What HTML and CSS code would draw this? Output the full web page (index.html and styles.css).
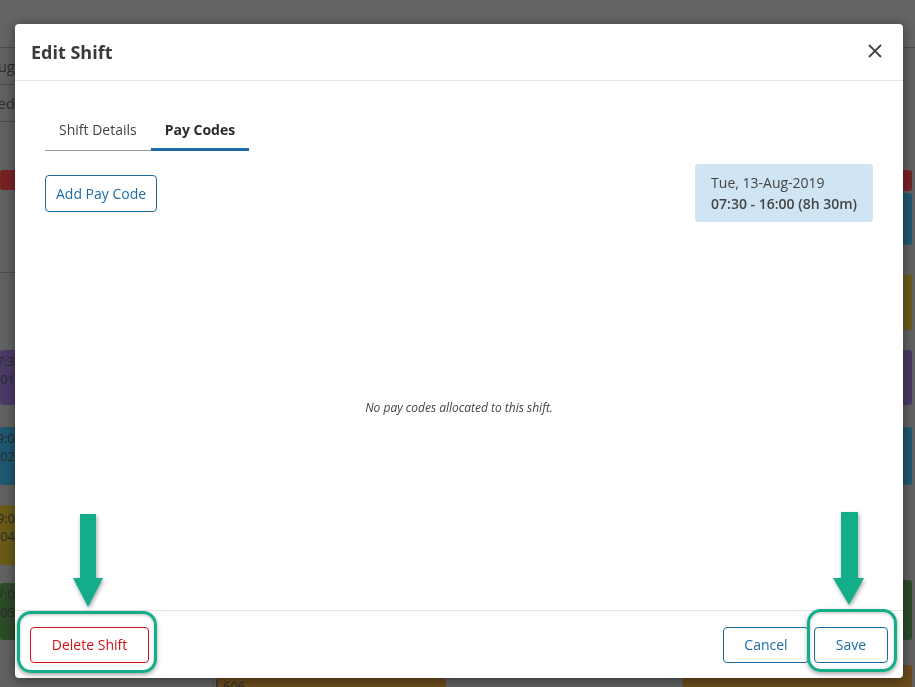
FILE: index.html
```html
<!DOCTYPE html>
<html lang="en">
<head>
    <meta charset="UTF-8">
    <title>Edit Shift</title>
    <link rel="stylesheet" href="styles.css">
</head>
<body>
    <!-- roster page behind the dialog, dimmed -->
    <div class="backdrop">
        <div class="topbar"></div>
        <div class="lanes">
            <div class="lane lane-left">
                <div class="row row-label">Aug-</div>
                <div class="row row-label">ed</div>
                <div class="block red b-red"></div>
                <div class="row-line l-272"></div>
                <div class="block purple b-purple"><span>07:3</span><span>01</span></div>
                <div class="block blue b-blue"><span>09:0</span><span>02</span></div>
                <div class="block yellow b-yellow"><span>09:0</span><span>04</span></div>
                <div class="block green b-green"><span>07:0</span><span>05</span></div>
            </div>
            <div class="lane lane-mid">
                <div class="block brown b-bottom">606</div>
            </div>
            <div class="lane lane-right">
                <div class="block red r-red"></div>
                <div class="block blue r-blue"></div>
                <div class="block yellow r-yellow"></div>
                <div class="block purple r-purple"></div>
                <div class="block blue r-blue2"></div>
                <div class="block green r-green"></div>
                <div class="block brown r-brown">606</div>
            </div>
        </div>
    </div>

    <div class="modal">
        <div class="modal-header">
            <h1>Edit Shift</h1>
            <svg class="close" width="14" height="14" viewBox="0 0 14 14">
                <path d="M1 1 L13 13 M13 1 L1 13" stroke="#444" stroke-width="1.8" fill="none"/>
            </svg>
        </div>

        <div class="modal-body">
            <ul class="tabs">
                <li>Shift Details</li>
                <li class="active">Pay Codes</li>
            </ul>

            <div class="toolbar">
                <button class="btn btn-blue">Add Pay Code</button>
                <div class="shift-date">
                    <div>Tue, 13-Aug-2019</div>
                    <div class="times">07:30 - 16:00 (8h 30m)</div>
                </div>
            </div>

            <div class="empty">No pay codes allocated to this shift.</div>
        </div>

        <div class="modal-footer">
            <button class="btn btn-red">Delete Shift</button>
            <div class="right-buttons">
                <button class="btn btn-blue btn-cancel">Cancel</button>
                <button class="btn btn-blue btn-save">Save</button>
            </div>
        </div>

        <!-- highlight annotations -->
        <div class="ring ring-left"></div>
        <div class="ring ring-right"></div>
        <svg class="arrow arrow-left" width="40" height="100" viewBox="0 0 40 100">
            <path d="M12 2 H28 V66 H35 L20 95 L5 66 H12 Z" fill="#13ad89"/>
        </svg>
        <svg class="arrow arrow-right" width="40" height="100" viewBox="0 0 40 100">
            <path d="M12 2 H29 V68 H35 L20 95 L4 68 H12 Z" fill="#13ad89"/>
        </svg>
    </div>
</body>
</html>
```

FILE: styles.css
```css
html, body {
    margin: 0;
    padding: 0;
    height: 100%;
    overflow: hidden;
}

body {
    background-color: #636363;
    font-family: 'Open Sans', 'Liberation Sans', sans-serif;
    color: #333;
}

/* ---------- dimmed page behind ---------- */

.backdrop {
    position: fixed;
    inset: 0;
    display: flex;
    flex-direction: column;
    background-color: #616161;
}

.topbar {
    height: 47px;
    flex: none;
    background-color: #646464;
    border-bottom: 1px solid #4c4c4c;
}

.lanes {
    flex: 1;
    display: flex;
}

.lane {
    display: flex;
    flex-direction: column;
    border-right: 1px solid #555;
}

.lane-left { width: 213px; }
.lane-mid { width: 468px; }
.lane-right { flex: 1; padding-right: 3px; border-right: 0; }

.row {
    border-bottom: 1px solid #4c4c4c;
}

.row-label {
    height: 36px;
    line-height: 36px;
    font-size: 15px;
    color: #2e2e2e;
    width: 15px;
    overflow: hidden;
    white-space: nowrap;
    direction: rtl;
    padding-right: 198px;
}

.row-line {
    height: 1px;
    background-color: #4c4c4c;
}

.block {
    border-radius: 3px;
    font-size: 13px;
    color: #2a2a2a;
    display: flex;
    flex-direction: column;
    align-items: flex-end;
    box-sizing: border-box;
    line-height: 18px;
    overflow: hidden;
}

.lane-left .block {
    padding-right: 198px;
    align-items: flex-end;
    white-space: nowrap;
}

.red { background-color: #782226; }
.purple { background-color: #4a3a66; }
.blue { background-color: #1f5873; }
.yellow { background-color: #6b5b18; }
.green { background-color: #2d4b28; }
.brown { background-color: #6a4c1d; }

.b-red { height: 20px; margin-top: 48px; }
.l-272 { margin-top: 82px; }
.b-purple { height: 55px; margin-top: 77px; padding-top: 2px; }
.b-blue { height: 58px; margin-top: 22px; padding-top: 2px; }
.b-yellow { height: 60px; margin-top: 20px; padding-top: 4px; }
.b-green { height: 57px; margin-top: 18px; padding-top: 2px; }

.b-bottom {
    margin-top: 630px;
    margin-left: 2px;
    height: 20px;
    width: 230px;
    padding: 0 0 0 5px;
    align-items: flex-start;
    border-left: 2px solid #3a3a3a;
    line-height: 16px;
}

.r-red { height: 21px; margin-top: 122px; }
.r-blue { height: 52px; margin-top: 2px; }
.r-yellow { height: 55px; margin-top: 30px; }
.r-purple { height: 55px; margin-top: 20px; }
.r-blue2 { height: 58px; margin-top: 22px; }
.r-green { height: 60px; margin-top: 95px; }
.r-brown {
    height: 30px;
    margin-top: 25px;
    align-items: flex-start;
    padding-left: 5px;
    line-height: 16px;
}

/* ---------- dialog ---------- */

.modal {
    position: relative;
    box-sizing: border-box;
    margin: 24px 12px 0 15px;
    height: 654px;
    background-color: #fff;
    border-radius: 4px;
    box-shadow: 0 2px 12px rgba(0, 0, 0, 0.45);
    display: flex;
    flex-direction: column;
}

.modal-header {
    height: 57px;
    flex: none;
    box-sizing: border-box;
    padding: 0 21px 0 16px;
    display: flex;
    align-items: center;
    justify-content: space-between;
    border-bottom: 1px solid #e3e3e3;
}

.modal-header h1 {
    margin: 0;
    font-size: 18px;
    font-weight: 700;
    color: #3a3a3a;
}

.close {
    margin-top: -3px;
}

.modal-body {
    flex: 1;
    display: flex;
    flex-direction: column;
    padding: 31px 30px 0 30px;
}

.tabs {
    list-style: none;
    margin: 0;
    padding: 0;
    display: flex;
    align-self: flex-start;
    border-bottom: 1px solid #9a9a9a;
}

.tabs li {
    padding: 8px 14px 8px 14px;
    font-size: 14px;
    line-height: 20px;
    color: #444;
    margin-bottom: -1px;
    border-bottom: 3px solid transparent;
}

.tabs li.active {
    font-weight: 700;
    color: #2b2b2b;
    border-bottom-color: #1c6ca3;
}

.toolbar {
    margin-top: 13px;
    display: flex;
    justify-content: space-between;
    align-items: center;
}

.btn {
    font-family: 'Open Sans', 'Liberation Sans', sans-serif;
    font-size: 14px;
    background-color: #fff;
    border-radius: 4px;
    height: 37px;
    padding: 0 10px;
    cursor: pointer;
}

.btn-blue {
    border: 1px solid #1c6ca3;
    color: #1c6ca3;
}

.btn-red {
    border: 1px solid #d0121b;
    color: #d0121b;
    width: 119px;
    height: 36px;
}

.shift-date {
    background-color: #cfe5f3;
    border-radius: 3px;
    padding: 8px 16px;
    font-size: 14px;
    line-height: 21px;
    color: #444;
}

.shift-date .times {
    font-weight: 600;
}

.empty {
    flex: 1;
    display: flex;
    align-items: center;
    justify-content: center;
    padding-bottom: 18px;
    font-size: 12px;
    font-style: italic;
    color: #444;
}

.modal-footer {
    flex: none;
    height: 68px;
    box-sizing: border-box;
    border-top: 1px solid #e3e3e3;
    padding: 0 15px;
    display: flex;
    align-items: center;
    justify-content: space-between;
}

.right-buttons {
    display: flex;
    gap: 5px;
}

.btn-cancel { width: 86px; height: 36px; }
.btn-save { width: 74px; height: 36px; }

/* ---------- annotations ---------- */

.ring {
    position: absolute;
    border: 3px solid #13ad89;
    border-radius: 14px;
    box-shadow: 0 2px 4px rgba(0, 0, 0, 0.35), inset 0 1px 3px rgba(0, 0, 0, 0.25);
}

.ring-left {
    left: 2px;
    top: 587px;
    width: 134px;
    height: 56px;
}

.ring-right {
    left: 792px;
    top: 585px;
    width: 84px;
    height: 57px;
}

.arrow {
    position: absolute;
    filter: drop-shadow(1px 2px 2px rgba(0, 0, 0, 0.35));
}

.arrow-left {
    left: 53px;
    top: 488px;
}

.arrow-right {
    left: 814px;
    top: 486px;
}
```
